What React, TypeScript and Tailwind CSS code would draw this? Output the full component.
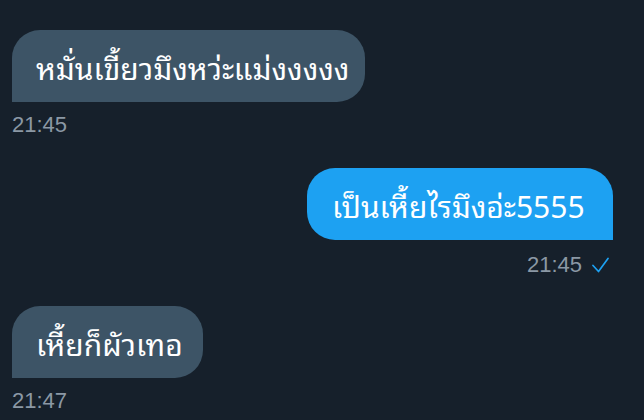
import React from "react";

export default function App() {
  return (
    <div className="w-[644px] h-[420px] bg-[#16202b] overflow-hidden flex flex-col pt-[30px] px-3">
      <div className="flex flex-col items-start">
        <div className="h-[72px] w-[353px] flex items-center pl-6 bg-[#3d5466] text-white text-[30px] rounded-[28px] rounded-bl-none whitespace-nowrap font-['Noto_Sans_Thai_Looped','Noto_Sans_Thai','Noto_Sans',sans-serif]">
          หมั่นเขี้ยวมึงหว่ะแม่งงงงง
        </div>
        <div className="mt-[11px] h-6 leading-6 text-[22px] text-[#8b98a5] font-['Liberation_Sans',Arial,sans-serif]">
          21:45
        </div>
      </div>

      <div className="flex flex-col items-end mt-[31px] pr-[19px]">
        <div className="h-[72px] w-[306px] flex items-center pl-[25px] bg-[#1da1f2] text-white text-[30px] rounded-[28px] rounded-br-none whitespace-nowrap font-['Noto_Sans_Thai_Looped','Noto_Sans_Thai','Noto_Sans',sans-serif]">
          เป็นเหี้ยไรมึงอ่ะ5555
        </div>
        <div className="mt-[13px] mr-1 h-6 flex items-center gap-[10px] text-[22px] leading-6 text-[#8b98a5] font-['Liberation_Sans',Arial,sans-serif]">
          <span>21:45</span>
          <svg width="17" height="16" viewBox="0 0 17 16">
            <path d="M1 8.5 L6.5 14.5 L16 1.5" fill="none" stroke="#1da1f2" strokeWidth="1.7" strokeLinecap="round" strokeLinejoin="round" />
          </svg>
        </div>
      </div>

      <div className="flex flex-col items-start mt-[29px]">
        <div className="h-[72px] w-[191px] flex items-center pl-6 bg-[#3d5466] text-white text-[30px] rounded-[28px] rounded-bl-none whitespace-nowrap font-['Noto_Sans_Thai_Looped','Noto_Sans_Thai','Noto_Sans',sans-serif]">
          เหี้ยก็ผัวเทอ
        </div>
        <div className="mt-[11px] h-6 leading-6 text-[22px] text-[#8b98a5] font-['Liberation_Sans',Arial,sans-serif]">
          21:47
        </div>
      </div>
    </div>
  );
}
